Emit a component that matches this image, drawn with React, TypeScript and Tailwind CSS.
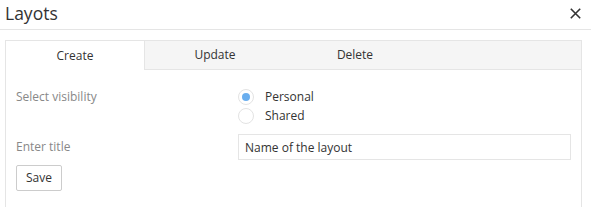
import { useState } from "react";

const tabs = ["Create", "Update", "Delete"];

export default function App() {
    const [tab, setTab] = useState("Create");
    const [visibility, setVisibility] = useState("personal");
    const [title, setTitle] = useState("Name of the layout");

    return (
        <div className="w-[591px] h-[207px] bg-white overflow-hidden text-[12px] text-[#333]" style={{ fontFamily: "'Open Sans', sans-serif" }}>
            {/* header */}
            <div className="flex items-center justify-between h-[30px] pl-[5px] pr-[10px] border-b border-[#e5e5e5]">
                <h1 className="text-[17.5px] leading-none text-[#333] -mt-[2px]">Layots</h1>
                <button className="text-[#333] -mt-[3px]" aria-label="Close">
                    <svg width="11" height="11" viewBox="0 0 11 11" stroke="currentColor" strokeWidth="1.6">
                        <path d="M0.8 0.8L10.2 10.2M10.2 0.8L0.8 10.2" />
                    </svg>
                </button>
            </div>

            <div className="mt-[10px] ml-[5px] mr-[9px] border-x border-t border-[#e5e5e5]">
                {/* tabs */}
                <div className="flex h-[29px] bg-[#f5f5f5] border-b border-[#e5e5e5]">
                    {tabs.map(t => (
                        <button
                            key={t}
                            onClick={() => setTab(t)}
                            className={
                                t === tab
                                    ? "w-[139px] h-[29px] bg-white border-r border-[#e5e5e5] -mb-px"
                                    : "w-[140px] h-[28px]"
                            }
                        >
                            {t}
                        </button>
                    ))}
                </div>

                <div className="pl-[10px] pr-[10px] pt-[19px] pb-[20px]">
                    <div className="flex">
                        <div className="w-[222px] text-[#888] leading-[16px]">Select visibility</div>
                        <div className="flex flex-col gap-[3px]">
                            {[
                                { id: "personal", label: "Personal" },
                                { id: "shared", label: "Shared" },
                            ].map(o => (
                                <label key={o.id} className="flex items-center gap-[11px] h-[16px] cursor-pointer">
                                    <span
                                        className="w-[16px] h-[16px] rounded-full border border-[#e3e3e3] bg-white flex items-center justify-center"
                                        onClick={() => setVisibility(o.id)}
                                    >
                                        {visibility === o.id && <span className="w-[8px] h-[8px] rounded-full bg-[#6aaeee]" />}
                                    </span>
                                    {o.label}
                                </label>
                            ))}
                        </div>
                    </div>

                    <div className="flex items-center mt-[10px]">
                        <div className="w-[222px] text-[#888]">Enter title</div>
                        <input
                            value={title}
                            onChange={e => setTitle(e.target.value)}
                            className="flex-1 h-[26px] border border-[#e5e5e5] px-[6px] outline-none text-[#333]"
                        />
                    </div>

                    <button className="mt-[5px] h-[26px] px-[9px] border border-[#ccc] rounded-[2px] text-[#333]">Save</button>
                </div>
            </div>
        </div>
    );
}
